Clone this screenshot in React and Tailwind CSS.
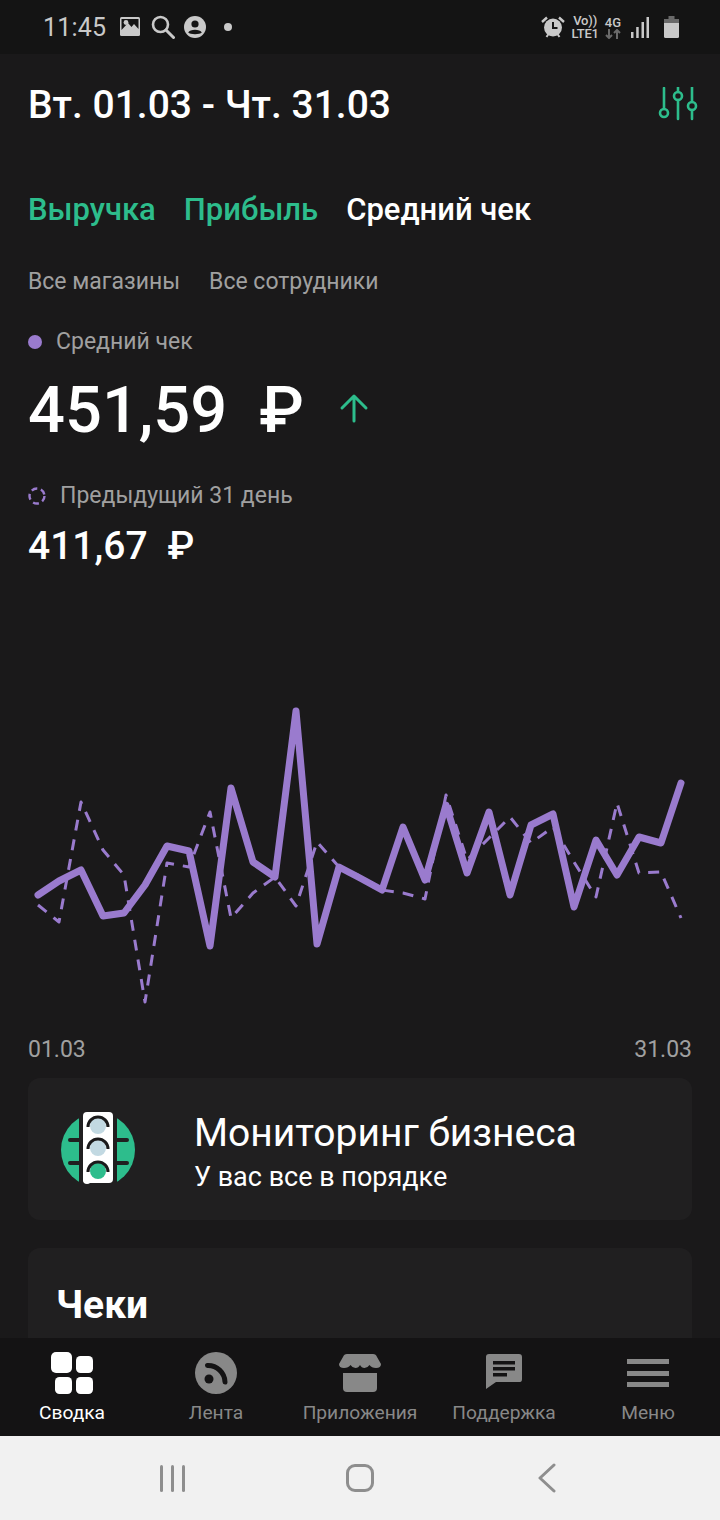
const current = '38,895 59,881 81,870 103,916 124,913 145,885 167,846 189,851 210,946 231,788 253,862 275,877 296,711 317,944 339,867 360,878 382,890 403,827 425,880 446,805 467,873 489,812 510,895 531,825 553,814 574,907 596,840 617,875 639,837 661,843 681,783'
const previous = '38,905 59,922 81,802 103,850 124,875 145,1002 167,863 189,867 210,812 231,918 253,893 275,877 296,906 317,842 339,867 360,876 382,890 403,893 425,899 446,795 467,860 489,838 510,817 531,843 553,827 574,862 596,897 617,803 639,873 661,872 681,918'

function StatusBar() {
  return (
    <div className="h-[54px] shrink-0 bg-[#141414] flex items-center pl-[43px] pr-[41px] text-[#c9c9c9]">
      <span className="text-[25px] leading-none font-normal tracking-[0.2px]">11:45</span>
      <svg className="ml-[13px]" width="22" height="22" viewBox="0 0 22 22" fill="none">
        <rect x="1" y="1" width="20" height="19" rx="1.5" fill="#c9c9c9" />
        <path d="M2.5 3 H19.5 V13 L15 8 L12.5 11 L9 7 L2.5 14 Z" fill="#141414" />
        <circle cx="7" cy="6.5" r="2.4" fill="#c9c9c9" />
      </svg>
      <svg className="ml-[10px]" width="24" height="24" viewBox="0 0 24 24" fill="none" stroke="#c9c9c9">
        <circle cx="9.5" cy="9.5" r="7.5" strokeWidth="2.6" />
        <path d="M15 15 L22.5 22.5" strokeWidth="3" strokeLinecap="round" />
      </svg>
      <svg className="ml-[9px]" width="22" height="22" viewBox="0 0 22 22">
        <circle cx="11" cy="11" r="11" fill="#c9c9c9" />
        <circle cx="11" cy="8" r="3.6" fill="#141414" />
        <path d="M4.2 16.6 C6 12.8 16 12.8 17.8 16.6 C15.8 18.8 6.2 18.8 4.2 16.6 Z" fill="#141414" />
      </svg>
      <span className="ml-[18px] w-[8px] h-[8px] rounded-full bg-[#c9c9c9]" />
      <svg className="ml-auto" width="24" height="24" viewBox="0 0 24 24">
        <path d="M1 7 L6 2.5 M23 7 L18 2.5" stroke="#c9c9c9" strokeWidth="2.4" />
        <path d="M5.5 22 L7.5 19 M18.5 22 L16.5 19" stroke="#c9c9c9" strokeWidth="2" />
        <circle cx="12" cy="12.5" r="9" fill="#c9c9c9" />
        <path d="M12 7 V13 H16.5" fill="none" stroke="#141414" strokeWidth="2" />
      </svg>
      <div className="ml-[6px] flex flex-col items-center font-medium text-[13px] leading-[13px] tracking-[-0.2px]">
        <span>Vo))</span>
        <span>LTE1</span>
      </div>
      <div className="ml-[6px] flex flex-col items-center">
        <span className="font-medium text-[13px] leading-[13px]">4G</span>
        <svg width="16" height="10" viewBox="0 0 16 10" fill="none" stroke="#6a6a6a" strokeWidth="2">
          <path d="M4 0 V9 M1 6 L4 9 L7 6" />
          <path d="M12 10 V1 M9 4 L12 1 L15 4" />
        </svg>
      </div>
      <svg className="ml-[10px]" width="18" height="21" viewBox="0 0 18 21" fill="#c9c9c9">
        <rect x="0" y="15" width="2.5" height="6" />
        <rect x="5.2" y="10" width="2.5" height="11" />
        <rect x="10.5" y="5" width="2.5" height="16" />
        <rect x="15.5" y="0" width="2.5" height="21" />
      </svg>
      <svg className="ml-[15px]" width="15" height="22" viewBox="0 0 15 22">
        <path d="M4.5 0 H10.5 V3 H15 V7 H0 V3 H4.5 Z" fill="#6a6a6a" />
        <path d="M0 7 H15 V20.5 Q15 22 13.5 22 H1.5 Q0 22 0 20.5 Z" fill="#c9c9c9" />
      </svg>
    </div>
  )
}

function TrafficLight() {
  return (
    <svg width="76" height="74" viewBox="0 0 76 74">
      <circle cx="37" cy="38" r="37" fill="#2dbd8c" />
      <path d="M9 28 H22 M9 51 H22 M52 28 H66 M52 51 H66" stroke="#201f20" strokeWidth="4" strokeLinecap="round" />
      <path d="M18 0 H56 V74 H18 Z" fill="#201f20" />
      <rect x="22" y="0" width="30" height="71" rx="4" fill="#ffffff" />
      <circle cx="26" cy="68" r="4" fill="#ffffff" />
      <circle cx="37" cy="14" r="8" fill="#c2d9e2" />
      <circle cx="37" cy="36" r="8" fill="#c2d9e2" />
      <circle cx="37" cy="59" r="8" fill="#2dbd8c" />
      <path d="M27 15 A10 10 0 0 1 47 15 M27 37 A10 10 0 0 1 47 37 M27 60 A10 10 0 0 1 47 60" fill="none" stroke="#1a191a" strokeWidth="3" />
    </svg>
  )
}

const navItems = [
  {
    label: 'Сводка',
    active: true,
    icon: (
      <svg width="44" height="44" viewBox="0 0 44 44" fill="#ffffff">
        <rect x="1" y="0" width="21" height="21" rx="5" />
        <rect x="26" y="4" width="17" height="17" rx="4.5" />
        <rect x="5" y="25" width="17" height="17" rx="4.5" />
        <rect x="26" y="25" width="17" height="17" rx="4.5" />
      </svg>
    ),
  },
  {
    label: 'Лента',
    icon: (
      <svg width="44" height="44" viewBox="0 0 44 44">
        <circle cx="22" cy="21" r="21" fill="#888888" />
        <circle cx="15" cy="27" r="4.5" fill="#141314" />
        <path d="M13.5 13.5 A17 17 0 0 1 31 30" fill="none" stroke="#141314" strokeWidth="5" strokeLinecap="round" />
      </svg>
    ),
  },
  {
    label: 'Приложения',
    icon: (
      <svg width="44" height="44" viewBox="0 0 44 44" fill="#888888">
        <path d="M9 2 H35 Q38 2 39 5 L43 12 Q43 16 38 16 Q33.5 16 31.5 13 Q29.5 16 26.5 16 Q23.5 16 22 13 Q20.5 16 17.5 16 Q14.5 16 12.5 13 Q10.5 16 6 16 Q1 16 1 12 L5 5 Q6 2 9 2 Z" />
        <path d="M5 21 H39 V36 Q39 40 35 40 H9 Q5 40 5 36 Z" />
      </svg>
    ),
  },
  {
    label: 'Поддержка',
    icon: (
      <svg width="44" height="44" viewBox="0 0 44 44">
        <path d="M7 2 Q4 2 4 5 V37 L14 30 H38 Q40 30 40 27 V5 Q40 2 37 2 Z" fill="#888888" />
        <path d="M11 9 H33 V12.5 H11 Z M11 15 H33 V18.5 H11 Z M11 21 H25 V24.5 H11 Z" fill="#141314" />
      </svg>
    ),
  },
  {
    label: 'Меню',
    icon: (
      <svg width="44" height="44" viewBox="0 0 44 44" fill="#888888">
        <rect x="1" y="7" width="42" height="5" />
        <rect x="1" y="19" width="42" height="5" />
        <rect x="1" y="30" width="42" height="5" />
      </svg>
    ),
  },
]

export default function App() {
  return (
    <div className="w-[720px] h-[1520px] flex flex-col overflow-hidden bg-[#1a191a] text-white font-['Roboto',sans-serif]">
      <StatusBar />

      <main className="flex-1 min-h-0 overflow-hidden px-[28px]">
        {/* Header */}
        <div className="mt-[29px] flex items-center justify-between">
          <h1 className="text-[39px] leading-[44px] font-medium">Вт. 01.03 - Чт. 31.03</h1>
          <svg className="-mr-[6px] -mt-[2px]" width="40" height="34" viewBox="0 0 40 34" fill="none" stroke="#2dbd8c" strokeWidth="2.6">
            <path d="M6 1 V22 M20 0 V5 M20 13 V32 M34 0 V15 M34 23 V32" strokeLinecap="round" />
            <circle cx="6" cy="26" r="4" />
            <circle cx="20" cy="9" r="4" />
            <circle cx="34" cy="19" r="4" />
          </svg>
        </div>

        {/* Tabs */}
        <div className="mt-[65px] flex gap-[28px] text-[31px] leading-[36px] font-medium">
          <span className="text-[#2dbd8c]">Выручка</span>
          <span className="text-[#2dbd8c]">Прибыль</span>
          <span>Средний чек</span>
        </div>

        <div className="mt-[41px] flex gap-[29px] text-[23px] leading-[26px] text-[#a0a0a0]">
          <span>Все магазины</span>
          <span>Все сотрудники</span>
        </div>

        {/* Totals */}
        <div className="mt-[34px] flex items-center text-[23px] leading-[26px] text-[#a0a0a0]">
          <span className="w-[14px] h-[14px] rounded-full bg-[#9a7bce]" />
          <span className="ml-[14px]">Средний чек</span>
        </div>
        <div className="mt-[17px] flex items-center text-[65px] leading-[76px] font-medium">
          <span>451,59</span>
          <span className="ml-[32px]">₽</span>
          <svg className="ml-[35px] -mt-[5px]" width="30" height="30" viewBox="0 0 30 30" fill="none" stroke="#2dbd8c" strokeWidth="3" strokeLinecap="round" strokeLinejoin="round">
            <path d="M15 28 V3 M3 15 L15 3 L27 15" />
          </svg>
        </div>

        <div className="mt-[35px] flex items-center text-[23px] leading-[26px] text-[#a0a0a0]">
          <svg width="18" height="18" viewBox="0 0 18 18" fill="none" stroke="#9a7bce" strokeWidth="2.4">
            <circle cx="9" cy="9" r="7.5" strokeDasharray="6 3.8" />
          </svg>
          <span className="ml-[14px]">Предыдущий 31 день</span>
        </div>
        <div className="mt-[15px] flex text-[39px] leading-[44px] font-medium">
          <span>411,67</span>
          <span className="ml-[20px]">₽</span>
        </div>

        {/* Chart */}
        <svg className="mt-[32px] -mx-[28px] block" width="720" height="430" viewBox="0 600 720 430" fill="none" stroke="#9a7bce">
          <polyline points={previous} strokeWidth="3" strokeDasharray="11 9" strokeLinejoin="round" />
          <polyline points={current} strokeWidth="7" strokeLinecap="round" strokeLinejoin="round" />
        </svg>

        <div className="mt-[7px] flex justify-between text-[23px] leading-[26px] text-[#a0a0a0]">
          <span>01.03</span>
          <span>31.03</span>
        </div>

        {/* Monitoring card */}
        <div className="mt-[15px] h-[142px] rounded-[12px] bg-[#201f20] flex items-center pl-[33px]">
          <TrafficLight />
          <div className="ml-[57px] pt-[5px]">
            <div className="text-[39px] leading-[44px]">Мониторинг бизнеса</div>
            <div className="mt-[6px] text-[27px] leading-[32px]">У вас все в порядке</div>
          </div>
        </div>

        {/* Receipts card */}
        <div className="mt-[28px] h-[200px] rounded-[12px] bg-[#201f20] px-[28px] pt-[35px]">
          <h2 className="text-[39px] leading-[44px] font-bold">Чеки</h2>
        </div>
      </main>

      {/* Bottom navigation */}
      <nav className="h-[98px] shrink-0 bg-[#141314] grid grid-cols-5 pt-[14px]">
        {navItems.map((item) => (
          <div key={item.label} className="flex flex-col items-center">
            {item.icon}
            <span className={`mt-[5px] text-[19.2px] leading-[24px] whitespace-nowrap ${item.active ? 'text-white' : 'text-[#888888]'}`}>
              {item.label}
            </span>
          </div>
        ))}
      </nav>

      {/* Android buttons */}
      <div className="h-[84px] shrink-0 bg-[#f1f1f1] grid grid-cols-3 items-center px-[79px]">
        <div className="flex justify-center gap-[8px]">
          <span className="w-[3px] h-[27px] rounded-full bg-[#8e8e8e]" />
          <span className="w-[3px] h-[27px] rounded-full bg-[#8e8e8e]" />
          <span className="w-[3px] h-[27px] rounded-full bg-[#8e8e8e]" />
        </div>
        <div className="flex justify-center">
          <span className="w-[28px] h-[28px] rounded-[9px] border-[3px] border-[#8e8e8e]" />
        </div>
        <div className="flex justify-center">
          <svg width="18" height="30" viewBox="0 0 18 30" fill="none" stroke="#8e8e8e" strokeWidth="3" strokeLinecap="round" strokeLinejoin="round">
            <path d="M16 2 L2 15 L16 28" />
          </svg>
        </div>
      </div>
    </div>
  )
}
